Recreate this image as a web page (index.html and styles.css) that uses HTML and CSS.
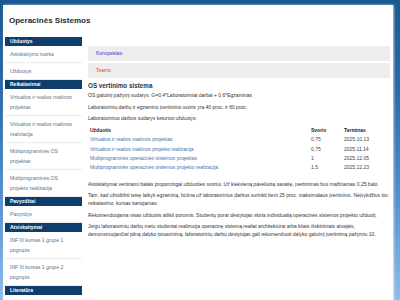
FILE: index.html
```html
<!DOCTYPE html>
<html lang="lt">
<head>
  <meta charset="utf-8">
  <meta name="viewport" content="width=device-width, initial-scale=1">
  <title>Operacinės Sistemos</title>
  <link rel="stylesheet" href="styles.css">
</head>
<body>
<div class="page">
  <h1 class="site-title">Operacinės Sistemos</h1>

  <div class="layout">
    <nav class="sidebar">
      <h3 class="nav-head">Užduotys</h3>
      <ul class="nav-list">
        <li><a href="#">Atsiskaitymo tvarka</a></li>
        <li><a href="#">Užduotys</a></li>
      </ul>

      <h3 class="nav-head">Reikalavimai</h3>
      <ul class="nav-list">
        <li><a href="#">Virtualios ir realios mašinos projektas</a></li>
        <li><a href="#">Virtualios ir realios mašinos realizacija</a></li>
        <li><a href="#">Multiprograminės OS projektas</a></li>
        <li><a href="#">Multiprograminės OS projekto realizacija</a></li>
      </ul>

      <h3 class="nav-head">Pavyzdžiai</h3>
      <ul class="nav-list">
        <li><a href="#">Pavyzdys</a></li>
      </ul>

      <h3 class="nav-head">Atsiskaitymai</h3>
      <ul class="nav-list">
        <li><a href="#">INF III kursas 1 grupė 1 pogrupis</a></li>
        <li><a href="#">INF III kursas 1 grupė 2 pogrupis</a></li>
      </ul>

      <h3 class="nav-head">Literatūra</h3>
    </nav>

    <main class="content">
      <div class="box"><a class="box-link konspektas" href="#">Konspektas</a></div>
      <div class="box"><a class="box-link teams" href="#">Teams</a></div>

      <h2 class="section-title">OS vertinimo sistema</h2>
      <p>OS galutinį pažymį sudarys: G=0,4*Laboratoriniai darbai + 0,6*Egzaminas</p>
      <p>Laboratorinių darbų ir egzamino įvertinimo svoris yra 40 proc. ir 60 proc.</p>
      <p>Laboratorinius darbus sudarys keturios užduotys:</p>

      <table class="tasks">
        <thead>
          <tr>
            <th>Užduotis</th>
            <th class="col-weight">Svoris</th>
            <th class="col-date">Terminas</th>
          </tr>
        </thead>
        <tbody>
          <tr>
            <td><a href="#">Virtualios ir realios mašinos projektas</a></td>
            <td>0,75</td>
            <td>2025.10.13</td>
          </tr>
          <tr>
            <td><a href="#">Virtualios ir realios mašinos projekto realizacija</a></td>
            <td>0,75</td>
            <td>2025.11.14</td>
          </tr>
          <tr>
            <td><a href="#">Multiprograminės operacinės sistemos projektas</a></td>
            <td>1</td>
            <td>2025.12.05</td>
          </tr>
          <tr>
            <td><a href="#">Multiprograminės operacinės sistemos projekto realizacija</a></td>
            <td>1,5</td>
            <td>2025.12.23</td>
          </tr>
        </tbody>
      </table>

      <p>Atsiskaitymai vertinami balais proporcingai užduoties svoriui. Už kiekvieną pavėluotą savaitę, įvertinimas bus mažinamas 0,25 balo.</p>
      <p>Tam, kad užsidirbti teisę laikyti egzaminą, būtina už laboratorinius darbus surinkti bent 25 proc. maksimalaus įvertinimo. Neįvykdžius šio reikalavimo, kursas kartojamas.</p>
      <p>Rekomenduojama visas užduotis atlikti poromis. Studentų porai dėstytojas skiria individualią operacinės sistemos projekto užduotį.</p>
      <p>Jeigu laboratorinių darbų metu studentai realizuoja operacinę sistemą realiai architektūrai arba kitais išskirtiniais atvejais, demonstruojančiai pilną dalyko įsisavinimą, laboratorinių darbų dėstytojas gali rekomenduoti dalyko galutinį įvertinimą pažymiu 10.</p>
    </main>
  </div>
</div>
</body>
</html>
```

FILE: styles.css
```css
* {
	box-sizing: border-box;
}

html,
body {
	height: 100%;
}

body {
	margin: 0;
	font-family: "Liberation Sans", Arial, sans-serif;
	color: #333;
	overflow: hidden;
	background: linear-gradient(180deg, #1a5990 0%, #2b6aa8 30%, #5290cf 65%, #8dbdea 100%);
}

a {
	text-decoration: none;
}

.page {
	margin: 5px 7px 0 3px;
	padding: 0 3px 0 2px;
	min-height: 100%;
	background: #fff;
	box-shadow: 1px 0 2px rgba(255, 255, 255, 0.7);
}

.site-title {
	margin: 0;
	height: 32px;
	padding-left: 4px;
	font-size: 8px;
	line-height: 32px;
	font-weight: bold;
	color: #1f2a36;
}

.layout {
	display: grid;
	grid-template-columns: 77px 1fr;
	gap: 6px;
}

/* sidebar */

.nav-head {
	margin: 0;
	height: 9px;
	padding-left: 5px;
	background: #0f3d6c;
	color: #fff;
	font-size: 5px;
	line-height: 9px;
	font-weight: bold;
}

.nav-list {
	list-style: none;
	margin: 0;
	padding: 0;
}

.nav-list li {
	padding: 3px 5px;
	border-bottom: 1px solid #ececec;
	font-size: 5.1px;
	line-height: 10px;
}

.nav-list a {
	color: #5b7089;
}

/* content */

.content {
	padding-top: 8.7px;
	font-size: 5px;
	line-height: 8px;
}

.box {
	height: 15px;
	margin-bottom: 2.6px;
	padding-left: 8px;
	background: #ededed;
	line-height: 15px;
}

.konspektas {
	color: #3a3ad2;
}

.teams {
	color: #e2433a;
}

.section-title {
	margin: 3px 0 1px;
	font-size: 6.3px;
	line-height: 9px;
	font-weight: bold;
	color: #1b3352;
}

.content p {
	margin: 0 0 3.6px;
}

.tasks {
	width: 100%;
	margin: 1.2px 0 7px;
	border-collapse: collapse;
}

.tasks th,
.tasks td {
	padding: 1px 2px;
	line-height: 7.3px;
	text-align: left;
	vertical-align: top;
}

.tasks th {
	font-weight: bold;
	color: #222;
}

.tasks td {
	color: #444;
}

.tasks td a {
	color: #3f73b0;
}

.col-weight {
	width: 33px;
}

.col-date {
	width: 48px;
}
```
